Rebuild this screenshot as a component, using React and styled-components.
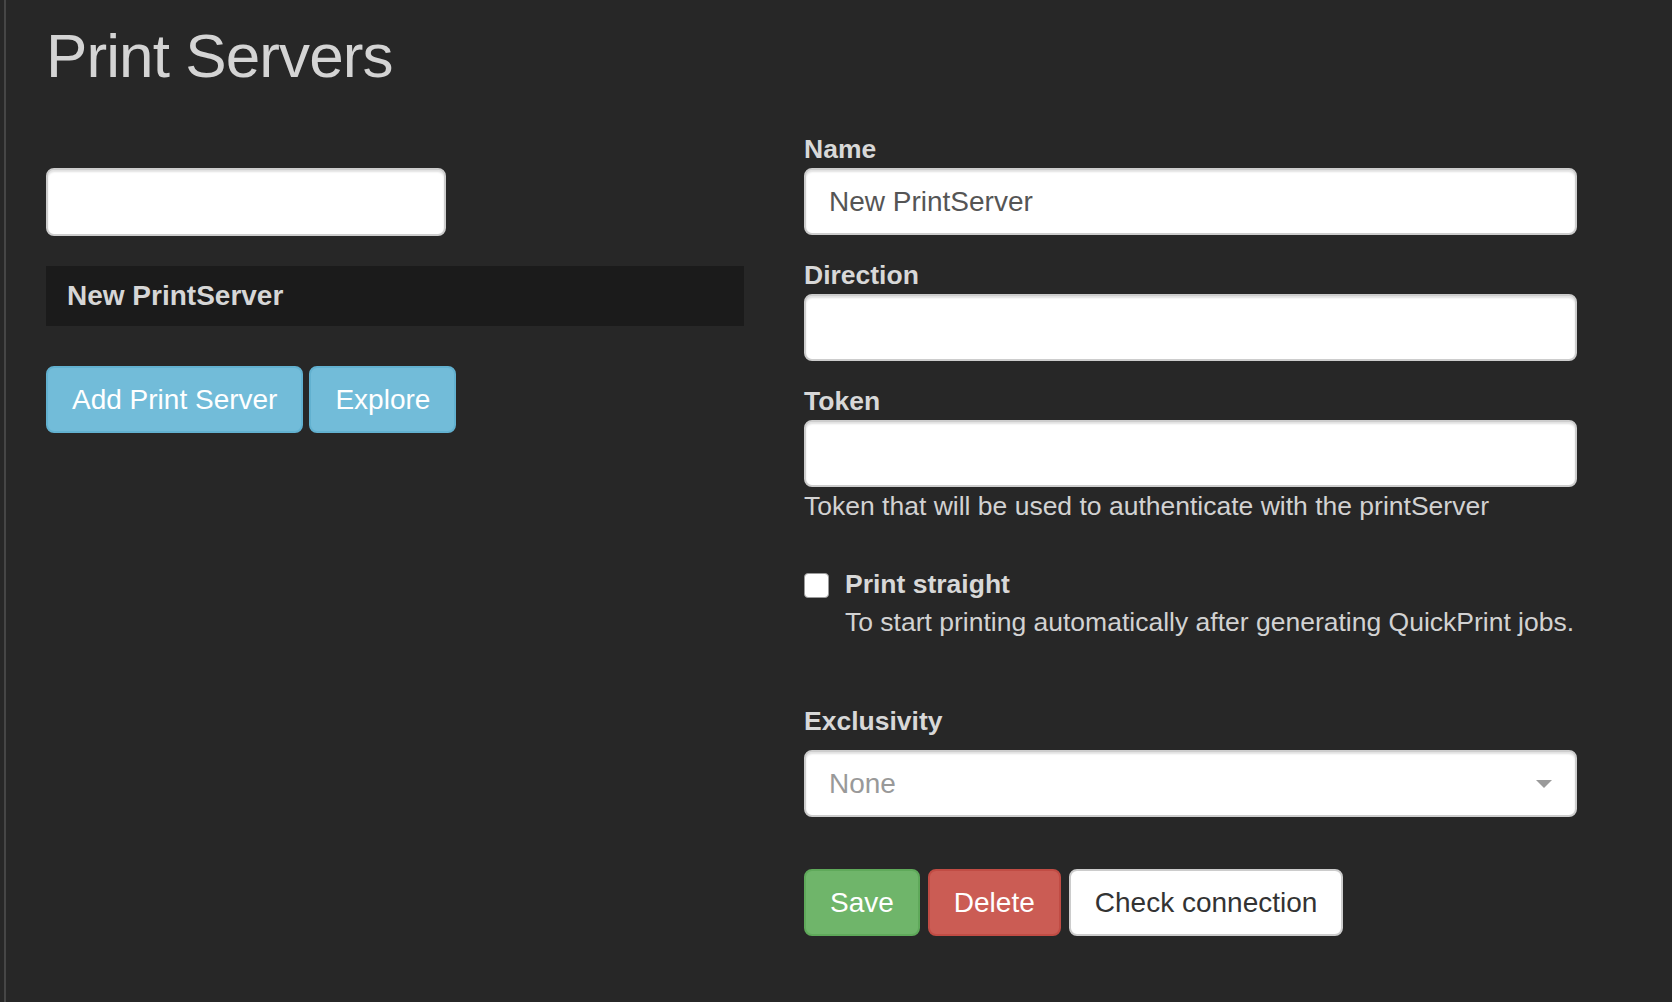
import React from 'react';
import styled, { createGlobalStyle } from 'styled-components';

const GlobalStyle = createGlobalStyle`
  html, body {
    margin: 0;
    padding: 0;
    background-color: #272727;
  }
  body {
    font-family: 'Liberation Sans', Arial, Helvetica, sans-serif;
    color: #d8d8d8;
  }
  * {
    box-sizing: border-box;
  }
`;

const App = () => {
  return (
    <>
      <GlobalStyle />
      <Page>
        <Title>Print Servers</Title>
        <Row>
          <LeftColumn>
            <SearchInput type="text" defaultValue="" />
            <ServerItem>New PrintServer</ServerItem>
            <ButtonRow>
              <Button variant="info">Add Print Server</Button>
              <Button variant="info">Explore</Button>
            </ButtonRow>
          </LeftColumn>

          <RightColumn>
            <FormGroup>
              <Label>Name</Label>
              <Input type="text" defaultValue="New PrintServer" />
            </FormGroup>
            <FormGroup>
              <Label>Direction</Label>
              <Input type="text" defaultValue="" />
            </FormGroup>
            <FormGroup last>
              <Label>Token</Label>
              <Input type="text" defaultValue="" />
              <HelpText>Token that will be used to authenticate with the printServer</HelpText>
            </FormGroup>

            <CheckRow>
              <Checkbox type="checkbox" />
              <CheckText>
                <CheckLabel>Print straight</CheckLabel>
                <CheckHelp>To start printing automatically after generating QuickPrint jobs.</CheckHelp>
              </CheckText>
            </CheckRow>

            <SelectGroup>
              <Label>Exclusivity</Label>
              <Select role="combobox">
                <Placeholder>None</Placeholder>
                <svg width="16" height="8" viewBox="0 0 16 8">
                  <path d="M0 0 L16 0 L8 8 Z" fill="#9a9a9a" />
                </svg>
              </Select>
            </SelectGroup>

            <ButtonRow gap={8} top={52}>
              <Button variant="success">Save</Button>
              <Button variant="danger">Delete</Button>
              <Button variant="default">Check connection</Button>
            </ButtonRow>
          </RightColumn>
        </Row>
      </Page>
    </>
  );
};

const Page = styled.div`
  margin-left: 4px;
  border-left: 2px solid #464646;
  min-height: 100vh;
  padding: 22px 0 0 40px;
`;

const Title = styled.h1`
  margin: 0;
  font-size: 62px;
  line-height: 68px;
  font-weight: normal;
  letter-spacing: -0.9px;
  color: #d4d4d4;
`;

const Row = styled.div`
  display: flex;
  gap: 60px;
  margin-top: 41px;
`;

const LeftColumn = styled.div`
  width: 698px;
  padding-top: 37px;
  display: flex;
  flex-direction: column;
`;

const RightColumn = styled.div`
  width: 773px;
  display: flex;
  flex-direction: column;
`;

const fieldBase = `
  height: 67px;
  background-color: #ffffff;
  border: 2px solid #cdcdcd;
  border-radius: 8px;
  box-shadow: inset 0 2px 2px rgba(0, 0, 0, 0.12);
  font-family: 'Liberation Sans', Arial, Helvetica, sans-serif;
  font-size: 28px;
  padding: 0 23px;
  outline: none;
`;

const SearchInput = styled.input`
  ${fieldBase}
  width: 400px;
  height: 68px;
`;

const ServerItem = styled.div`
  margin-top: 30px;
  height: 60px;
  display: flex;
  align-items: center;
  padding-left: 21px;
  background-color: #1b1b1b;
  font-size: 28px;
  font-weight: bold;
  color: #d6d6d6;
`;

const ButtonRow = styled.div`
  display: flex;
  gap: ${(props) => props.gap || 6}px;
  margin-top: ${(props) => props.top || 40}px;
`;

const colors = {
  info: { bg: '#72bcd9', border: '#62b1d0', color: '#ffffff' },
  success: { bg: '#6fb56a', border: '#5fa95a', color: '#ffffff' },
  danger: { bg: '#cb5c54', border: '#c14c44', color: '#ffffff' },
  default: { bg: '#ffffff', border: '#cccccc', color: '#333333' },
};

const Button = styled.button`
  height: 67px;
  padding: 0 24px;
  border-radius: 8px;
  border: 2px solid ${(props) => colors[props.variant].border};
  background-color: ${(props) => colors[props.variant].bg};
  color: ${(props) => colors[props.variant].color};
  font-family: 'Liberation Sans', Arial, Helvetica, sans-serif;
  font-size: 28px;
  cursor: pointer;
  white-space: nowrap;
`;

const FormGroup = styled.div`
  display: flex;
  flex-direction: column;
  margin-bottom: ${(props) => (props.last ? 0 : 22)}px;
`;

const Label = styled.label`
  font-size: 26.5px;
  line-height: 37px;
  font-weight: bold;
  color: #d8d8d8;
`;

const Input = styled.input`
  ${fieldBase}
  width: 100%;
  color: #555555;
`;

const HelpText = styled.div`
  font-size: 26.5px;
  line-height: 38px;
  color: #d2d2d2;
  white-space: nowrap;
`;

const CheckRow = styled.div`
  display: flex;
  align-items: flex-start;
  gap: 16px;
  margin-top: 40px;
`;

const Checkbox = styled.input`
  appearance: none;
  margin: 8px 0 0 0;
  width: 25px;
  height: 25px;
  flex-shrink: 0;
  background-color: #ffffff;
  border: 1px solid #9a9a9a;
  border-radius: 4px;
`;

const CheckText = styled.div`
  display: flex;
  flex-direction: column;
`;

const CheckLabel = styled.div`
  font-size: 26.5px;
  line-height: 38px;
  font-weight: bold;
  color: #d8d8d8;
`;

const CheckHelp = styled.div`
  font-size: 26.5px;
  line-height: 38px;
  color: #d2d2d2;
  white-space: nowrap;
`;

const SelectGroup = styled.div`
  display: flex;
  flex-direction: column;
  gap: 10px;
  margin-top: 61px;

  label {
    line-height: 38px;
  }
`;

const Select = styled.div`
  ${fieldBase}
  width: 100%;
  height: 67px;
  display: flex;
  align-items: center;
  justify-content: space-between;
  padding-right: 23px;
`;

const Placeholder = styled.span`
  color: #999999;
`;

export default App;
